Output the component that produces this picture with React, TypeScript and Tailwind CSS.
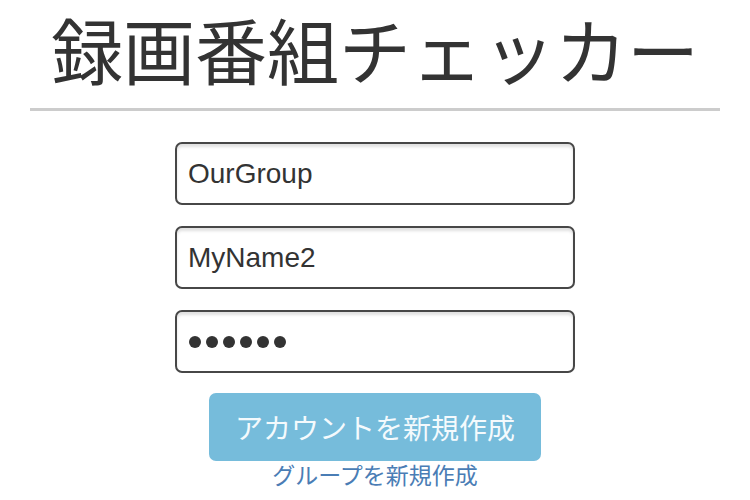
const cjk = '"Noto Sans CJK JP", "Liberation Sans", sans-serif';
const latin = '"Liberation Sans", Arial, "Noto Sans CJK JP", sans-serif';

function Field({ children }: { children: React.ReactNode }) {
  return (
    <div className="flex h-[63px] w-[400px] items-center rounded-[7px] border-2 border-[#474747] bg-white pl-[11px] shadow-[inset_0_3px_3px_rgba(0,0,0,0.12)]">
      {children}
    </div>
  );
}

export default function App() {
  return (
    <div className="h-[500px] w-[750px] overflow-hidden bg-white text-[#333]">
      <h1
        className="-mt-[4px] text-center text-[72px] leading-[104px] font-normal"
        style={{ fontFamily: cjk }}
      >
        録画番組チェッカー
      </h1>

      <div className="mx-[30px] mt-[8px] h-[3px] bg-[#cccccc]" />

      <div className="mt-[31px] flex flex-col items-center">
        <div className="flex flex-col gap-[21px]">
          <Field>
            <span className="text-[28px] leading-none" style={{ fontFamily: latin }}>
              OurGroup
            </span>
          </Field>
          <Field>
            <span className="text-[28px] leading-none" style={{ fontFamily: latin }}>
              MyName2
            </span>
          </Field>
          <Field>
            <div className="ml-[1px] flex gap-[5px]">
              {[0, 1, 2, 3, 4, 5].map((i) => (
                <span key={i} className="h-[12px] w-[12px] rounded-full bg-[#333]" />
              ))}
            </div>
          </Field>
        </div>

        <button
          className="mt-[20px] h-[68px] w-[332px] rounded-[7px] bg-[#76bcdb] text-[28px] text-[#f4fafd]"
          style={{ fontFamily: cjk }}
        >
          アカウントを新規作成
        </button>

        <a
          className="mt-[-2px] text-[23px] leading-[30px] text-[#4a7db5]"
          style={{ fontFamily: cjk }}
        >
          グループを新規作成
        </a>
      </div>
    </div>
  );
}
